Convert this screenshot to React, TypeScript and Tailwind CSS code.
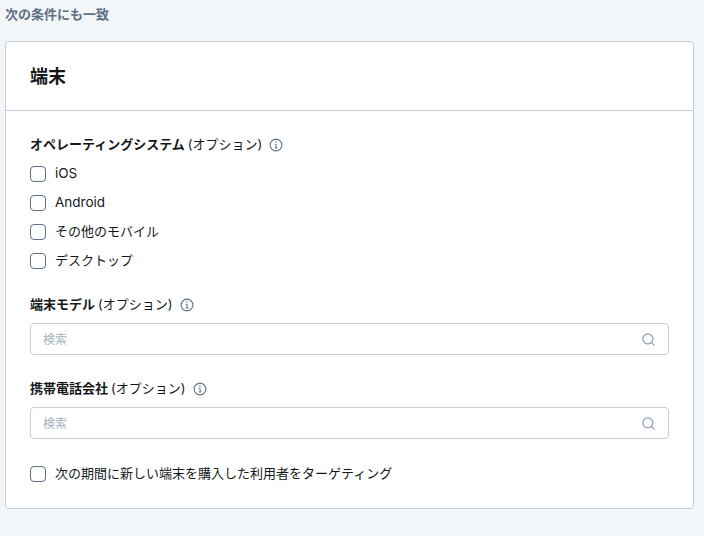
import React from 'react';
import { Search } from 'lucide-react';

const font = "font-['Inter','Noto_Sans_CJK_JP',sans-serif]";

function InfoIcon() {
  return (
    <svg viewBox="0 0 14 14" className="ml-[7px] h-[14px] w-[14px] shrink-0 text-[#5b7083]" fill="none" stroke="currentColor">
      <circle cx="7" cy="7" r="5.9" strokeWidth="1.1" />
      <path d="M5.8 6.3H7.1V10M5.6 10H8.5" strokeWidth="1" />
      <circle cx="7" cy="4.1" r="0.75" fill="currentColor" stroke="none" />
    </svg>
  );
}

function Check({ label, latin }: { label: string; latin?: boolean }) {
  return (
    <label className={`flex h-[29px] items-center gap-[9px] text-[#14171a] ${latin ? 'text-[13.5px]' : 'text-[13px]'}`}>
      <span className="h-4 w-4 shrink-0 rounded-[4px] border border-[#5b7083] bg-white" />
      {label}
    </label>
  );
}

function FieldLabel({ title }: { title: string }) {
  return (
    <div className="flex h-5 items-center text-[13px] text-[#14171a]">
      <span className="font-bold">{title}</span>
      <span className="ml-[3px]">(オプション)</span>
      <InfoIcon />
    </div>
  );
}

function SearchBox() {
  return (
    <div className="mt-[8px] flex h-8 items-center justify-between rounded-[4px] border border-[#c4cfd9] bg-white pl-3 pr-3">
      <span className="pt-px text-xs text-[#a3b1be]">検索</span>
      <Search className="h-[15px] w-[15px] text-[#8c9dab]" strokeWidth={2} />
    </div>
  );
}

export default function App() {
  return (
    <div className={`h-[536px] w-[704px] overflow-hidden bg-[#f3f6f9] px-[5px] pt-[6px] ${font}`}>
      <p className="h-[35px] text-[13px] leading-[16px] font-bold text-[#5b7083]">次の条件にも一致</p>

      <section className="w-[689px] rounded-[4px] border border-[#c4cfd9] bg-white">
        <header className="flex h-[69px] items-center border-b border-[#c4cfd9] px-6">
          <h2 className="text-[18px] font-bold text-[#14171a]">端末</h2>
        </header>

        <div className="px-6 pt-6">
          <FieldLabel title="オペレーティングシステム" />
          <div className="mt-[4px] flex flex-col">
            <Check label="iOS" latin />
            <Check label="Android" latin />
            <Check label="その他のモバイル" />
            <Check label="デスクトップ" />
          </div>

          <div className="mt-[20px]">
            <FieldLabel title="端末モデル" />
            <SearchBox />
          </div>

          <div className="mt-[24px]">
            <FieldLabel title="携帯電話会社" />
            <SearchBox />
          </div>

          <div className="mt-[20px] pb-5">
            <Check label="次の期間に新しい端末を購入した利用者をターゲティング" />
          </div>
        </div>
      </section>
    </div>
  );
}
